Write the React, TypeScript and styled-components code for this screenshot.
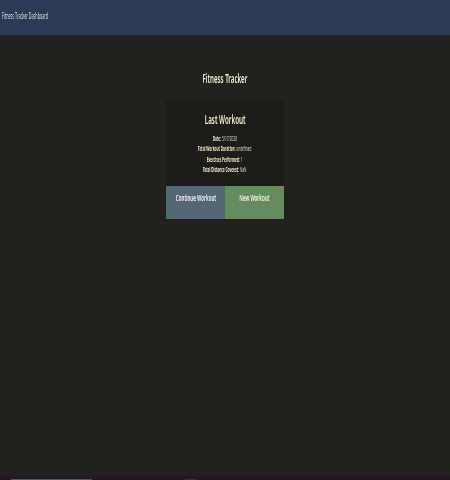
import React from "react";
import styled, { createGlobalStyle } from "styled-components";

const GlobalStyle = createGlobalStyle`
  * { box-sizing: border-box; }
  body {
    margin: 0;
    background: #22211d;
    font-family: "Noto Sans", "Open Sans", sans-serif;
  }
`;

const Page = styled.div`
  display: flex;
  flex-direction: column;
  width: 100%;
  height: 480px;
  overflow: hidden;
`;

const Condensed = styled.span<{ $scale: number; $origin?: string }>`
  display: inline-block;
  flex: none;
  white-space: nowrap;
  transform: scaleX(${(p) => p.$scale});
  transform-origin: ${(p) => p.$origin ?? "center"};
  will-change: opacity;
`;

const NavBar = styled.nav`
  flex: none;
  height: 35px;
  padding: 8px 2px;
  background: #2b3b55;
  color: #dcdee0;
  font-size: 8.5px;
  line-height: 16px;
`;

const Main = styled.main`
  flex: 1;
  display: flex;
  flex-direction: column;
  align-items: center;
  padding-top: 34px;
`;

const Title = styled.h1`
  display: flex;
  justify-content: center;
  width: 118px;
  margin: 0 0 12px;
  color: #f3efcf;
  font-size: 12px;
  font-weight: 600;
  line-height: 20px;
`;

const Card = styled.section`
  width: 118px;
  background: #1d1c18;
  box-shadow: 0 0 2px rgba(0, 0, 0, 0.15);
`;

const Summary = styled.div`
  height: 85px;
  padding-top: 9px;
  color: #f3efcf;
`;

const CardTitle = styled.h2`
  display: flex;
  justify-content: center;
  margin: 0 0 4px;
  font-size: 12px;
  font-weight: 600;
  line-height: 20px;
`;

const Stat = styled.p`
  display: flex;
  justify-content: center;
  margin: 0;
  color: #dedabd;
  font-size: 6.5px;
  line-height: 10.4px;

  strong { font-weight: 700; color: #ece8ca; }
`;

const Actions = styled.div`
  display: grid;
  grid-template-columns: repeat(2, minmax(0, 1fr));
`;

const Action = styled.button<{ $color: string }>`
  display: flex;
  justify-content: center;
  align-items: flex-start;
  height: 33px;
  padding: 4px 0 0;
  border: 0;
  background: ${(p) => p.$color};
  color: #f4f5f0;
  font-family: inherit;
  font-size: 8.5px;
  font-weight: 600;
  line-height: 16px;
`;

const Taskbar = styled.footer`
  display: flex;
  flex: none;
  align-items: flex-end;
  gap: 93px;
  height: 4px;
  padding-left: 11px;
  border-top: 3px solid #211a20;
  background: #22151f;
`;

const TaskItem = styled.div<{ $width: number; $color: string }>`
  width: ${(p) => p.$width}px;
  height: 1px;
  background: ${(p) => p.$color};
`;

const stats = [
  { label: "Date:", value: "5/17/2020", scale: 0.49 },
  { label: "Total Workout Duration:", value: "undefined", scale: 0.482 },
  { label: "Exercises Performed:", value: "1", scale: 0.485 },
  { label: "Total Distance Covered:", value: "NaN", scale: 0.48 },
];

export default function App() {
  return (
    <>
      <GlobalStyle />
      <Page>
        <NavBar>
          <Condensed $scale={0.435} $origin="left">Fitness Tracker Dashboard</Condensed>
        </NavBar>
        <Main>
          <Title><Condensed $scale={0.51}>Fitness Tracker</Condensed></Title>
          <Card>
            <Summary>
              <CardTitle><Condensed $scale={0.52}>Last Workout</Condensed></CardTitle>
              {stats.map((s) => (
                <Stat key={s.label}>
                  <Condensed $scale={s.scale}><strong>{s.label}</strong> {s.value}</Condensed>
                </Stat>
              ))}
            </Summary>
            <Actions>
              <Action $color="#526873"><Condensed $scale={0.53}>Continue Workout</Condensed></Action>
              <Action $color="#668b5e"><Condensed $scale={0.53}>New Workout</Condensed></Action>
            </Actions>
          </Card>
        </Main>
        <Taskbar>
          <TaskItem $width={81} $color="#5a5258" />
          <TaskItem $width={12} $color="#3a2f37" />
        </Taskbar>
      </Page>
    </>
  );
}
